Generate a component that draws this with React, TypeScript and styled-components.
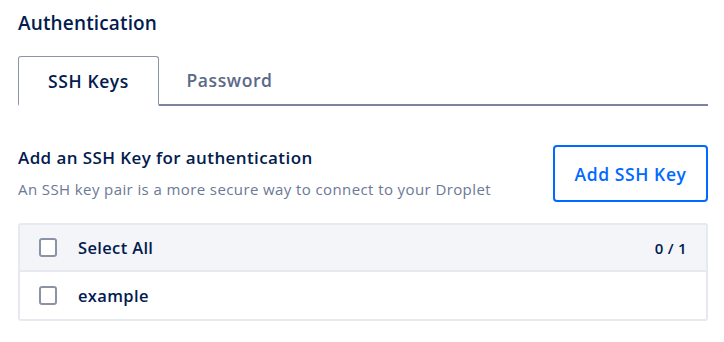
import React, { useState } from "react";
import styled, { createGlobalStyle } from "styled-components";

const Global = createGlobalStyle`
  html, body { margin: 0; padding: 0; background: #fff; }
  body { font-family: "Open Sans", "Noto Sans", sans-serif; color: #031b4e; -webkit-font-smoothing: antialiased; }
  * { box-sizing: border-box; }
`;

const Page = styled.div`
  padding: 10px 16px 0 18px;
  width: 724px;
`;

const Title = styled.h2`
  margin: 0;
  font-size: 19px;
  font-weight: 600;
  letter-spacing: 0.15px;
  line-height: 26px;
  color: #031b4e;
`;

const Tabs = styled.div`
  display: flex;
  margin-top: 20px;
  border-bottom: 2px solid #7b849a;
  height: 50px;
`;

const Tab = styled.button<{ $active?: boolean }>`
  width: 141px;
  height: ${(p) => (p.$active ? "50px" : "48px")};
  border: ${(p) => (p.$active ? "1px solid #8a93a8" : "none")};
  border-bottom: ${(p) => (p.$active ? "2px solid #fff" : "none")};
  border-radius: 3px 3px 0 0;
  background: #fff;
  font-family: inherit;
  font-size: 17.5px;
  letter-spacing: 0.6px;
  font-weight: 600;
  color: ${(p) => (p.$active ? "#031b4e" : "#5b6987")};
  padding: 0;
  cursor: pointer;
  margin-bottom: -2px;
`;

const Section = styled.div`
  display: flex;
  justify-content: space-between;
  align-items: flex-start;
  margin-top: 39px;
`;

const Texts = styled.div`
  display: flex;
  flex-direction: column;
  gap: 10px;
  padding-top: 2px;
`;

const Heading = styled.div`
  font-size: 17px;
  font-weight: 600;
  letter-spacing: 0.4px;
  color: #031b4e;
  line-height: 22px;
`;

const Sub = styled.div`
  font-size: 15px;
  letter-spacing: 0.4px;
  color: #6b7897;
  line-height: 20px;
`;

const AddButton = styled.button`
  width: 155px;
  height: 57px;
  border: 2px solid #0069ff;
  border-radius: 4px;
  background: #fff;
  color: #0069ff;
  font-family: inherit;
  font-size: 17.5px;
  letter-spacing: 0.6px;
  font-weight: 600;
  cursor: pointer;
`;

const Table = styled.div`
  margin-top: 21px;
  width: 690px;
  border: 2px solid #e6e9ee;
  border-radius: 3px;
`;

const Row = styled.div<{ $header?: boolean }>`
  display: flex;
  align-items: center;
  height: 47px;
  padding: 0 19px;
  background: ${(p) => (p.$header ? "#f3f5f9" : "#fff")};
  border-bottom: ${(p) => (p.$header ? "2px solid #e6e9ee" : "none")};
`;

const Box = styled.span`
  width: 18px;
  height: 19px;
  border: 2px solid #8a93a6;
  border-radius: 3px;
  background: #fff;
  flex: none;
`;

const Label = styled.span`
  margin-left: 21px;
  font-size: 16.5px;
  font-weight: 600;
  letter-spacing: 0.35px;
  color: #031b4e;
  flex: 1;
`;

const Count = styled.span`
  font-size: 15px;
  font-weight: 600;
  letter-spacing: 0.3px;
  color: #031b4e;
`;

export default function App() {
  const [tab, setTab] = useState(0);
  return (
    <>
      <Global />
      <Page>
        <Title>Authentication</Title>
        <Tabs>
          <Tab $active={tab === 0} onClick={() => setTab(0)}>SSH Keys</Tab>
          <Tab $active={tab === 1} onClick={() => setTab(1)}>Password</Tab>
        </Tabs>
        <Section>
          <Texts>
            <Heading>Add an SSH Key for authentication</Heading>
            <Sub>An SSH key pair is a more secure way to connect to your Droplet</Sub>
          </Texts>
          <AddButton>Add SSH Key</AddButton>
        </Section>
        <Table>
          <Row $header>
            <Box />
            <Label>Select All</Label>
            <Count>0 / 1</Count>
          </Row>
          <Row>
            <Box />
            <Label>example</Label>
          </Row>
        </Table>
      </Page>
    </>
  );
}
